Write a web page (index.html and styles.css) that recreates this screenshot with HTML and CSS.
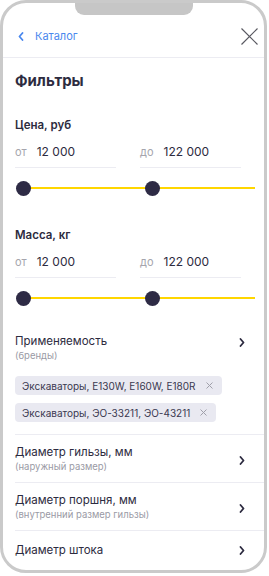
FILE: index.html
```html
<!DOCTYPE html>
<html lang="ru">
<head>
  <meta charset="UTF-8" />
  <meta name="viewport" content="width=device-width, initial-scale=1.0" />
  <title>Фильтры</title>
  <link rel="stylesheet" href="styles.css">
</head>
<body>

  <div class="phone">
    <!-- notch -->
    <div class="notch"></div>

    <!-- header -->
    <div class="header">
      <a class="back" href="#">
        <svg width="6" height="9" viewBox="0 0 6 9"><path d="M4.5 1 L1.5 4.5 L4.5 8" fill="none" stroke="#4a88ee" stroke-width="1.8" stroke-linecap="round" stroke-linejoin="round"/></svg>
        <span>Каталог</span>
      </a>
      <svg class="close" width="17" height="17" viewBox="0 0 17 17"><path d="M0.5 0.5 L16.5 16.5 M16.5 0.5 L0.5 16.5" stroke="#5a5a62" stroke-width="1.2"/></svg>
    </div>

    <div class="content">
      <h1 class="title">Фильтры</h1>

      <!-- price -->
      <div class="range">
        <div class="range-label">Цена, руб</div>
        <div class="fields">
          <div class="field"><span class="pre">от</span><span class="val">12 000</span></div>
          <div class="field"><span class="pre">до</span><span class="val">122 000</span></div>
        </div>
        <div class="slider">
          <div class="knob"></div>
          <div class="knob knob-2"></div>
        </div>
      </div>

      <!-- mass -->
      <div class="range">
        <div class="range-label">Масса, кг</div>
        <div class="fields">
          <div class="field"><span class="pre">от</span><span class="val">12 000</span></div>
          <div class="field"><span class="pre">до</span><span class="val">122 000</span></div>
        </div>
        <div class="slider">
          <div class="knob"></div>
          <div class="knob knob-2"></div>
        </div>
      </div>

      <!-- brands -->
      <div class="apply">
        <div class="row-head">
          <div>
            <div class="row-title">Применяемость</div>
            <div class="row-sub">(бренды)</div>
          </div>
          <svg class="chev" width="6" height="9" viewBox="0 0 6 9"><path d="M1.5 1 L4.5 4.5 L1.5 8" fill="none" stroke="#2d2b40" stroke-width="1.8" stroke-linecap="round" stroke-linejoin="round"/></svg>
        </div>
        <div class="chips">
          <span class="chip">Экскаваторы, E130W, E160W, E180R
            <svg class="x" width="7" height="7" viewBox="0 0 7 7"><path d="M0.5 0.5 L6.5 6.5 M6.5 0.5 L0.5 6.5" stroke="#a0a0aa" stroke-width="1"/></svg>
          </span>
          <span class="chip">Экскаваторы, ЭО-33211, ЭО-43211
            <svg class="x" width="7" height="7" viewBox="0 0 7 7"><path d="M0.5 0.5 L6.5 6.5 M6.5 0.5 L0.5 6.5" stroke="#a0a0aa" stroke-width="1"/></svg>
          </span>
        </div>
      </div>

      <div class="row">
        <div>
          <div class="row-title">Диаметр гильзы, мм</div>
          <div class="row-sub">(наружный размер)</div>
        </div>
        <svg class="chev" width="6" height="9" viewBox="0 0 6 9"><path d="M1.5 1 L4.5 4.5 L1.5 8" fill="none" stroke="#2d2b40" stroke-width="1.8" stroke-linecap="round" stroke-linejoin="round"/></svg>
      </div>

      <div class="row">
        <div>
          <div class="row-title">Диаметр поршня, мм</div>
          <div class="row-sub">(внутренний размер гильзы)</div>
        </div>
        <svg class="chev" width="6" height="9" viewBox="0 0 6 9"><path d="M1.5 1 L4.5 4.5 L1.5 8" fill="none" stroke="#2d2b40" stroke-width="1.8" stroke-linecap="round" stroke-linejoin="round"/></svg>
      </div>

      <div class="row row-single">
        <div class="row-title">Диаметр штока</div>
        <svg class="chev" width="6" height="9" viewBox="0 0 6 9"><path d="M1.5 1 L4.5 4.5 L1.5 8" fill="none" stroke="#2d2b40" stroke-width="1.8" stroke-linecap="round" stroke-linejoin="round"/></svg>
      </div>
    </div>
  </div>

</body>
</html>
```

FILE: styles.css
```css
* {
  margin: 0;
  padding: 0;
  box-sizing: border-box;
}

body {
  background: #fff;
  font-family: Inter, "Noto Sans", sans-serif;
  color: #2d2b40;
}

.phone {
  position: relative;
  width: 267px;
  height: 573px;
  border: 3px solid #cacaca;
  border-radius: 26px;
  overflow: hidden;
  background: #fff;
}

.notch {
  position: absolute;
  top: -3px;
  left: 72px;
  width: 118px;
  height: 15px;
  background: #c6c6c6;
  border-radius: 0 0 9px 9px;
}

.header {
  height: 55px;
  padding: 12px 6px 0 14px;
  display: flex;
  align-items: center;
  justify-content: space-between;
  border-bottom: 1px solid #ececf2;
}

.back {
  display: flex;
  align-items: center;
  gap: 11px;
  color: #4a88ee;
  text-decoration: none;
  font-size: 11px;
  padding-left: 1px;
}

.close {
  display: block;
}

.content {
  padding: 0 0 0 12px;
}

.title {
  font-size: 15px;
  font-weight: 700;
  line-height: 20px;
  margin-top: 13px;
}

.range {
  padding-right: 9px;
}

.range-label {
  font-size: 11.5px;
  font-weight: 600;
  line-height: 16px;
  margin-top: 26px;
}

.range + .range .range-label {
  margin-top: 31px;
}

.fields {
  display: flex;
  gap: 24px;
  margin-top: 9px;
}

.field {
  width: 101px;
  display: flex;
  align-items: baseline;
  gap: 10px;
  line-height: 20px;
  padding-bottom: 5px;
  border-bottom: 1px solid #ececf2;
}

.pre {
  font-size: 11px;
  color: #a5a5ad;
}

.val {
  font-size: 12px;
}

.slider {
  position: relative;
  height: 15px;
  margin: 13px 0 0 1px;
}

.slider::before {
  content: "";
  position: absolute;
  left: 8px;
  right: 0;
  top: 6px;
  height: 2px;
  background: #ffd600;
}

.knob {
  position: absolute;
  left: 0;
  top: 0;
  width: 15px;
  height: 15px;
  border-radius: 50%;
  background: #2e2b45;
}

.knob-2 {
  left: 129px;
}

.apply {
  padding: 28px 19px 12px 0;
  border-bottom: 1px solid #ececf2;
}

.row-head {
  display: flex;
  justify-content: space-between;
  align-items: flex-start;
}

.row-head .chev {
  margin-top: 4px;
}

.row-title {
  font-size: 11.5px;
  line-height: 15px;
}

.row-sub {
  font-size: 9.5px;
  line-height: 13px;
  color: #9a9aa5;
}

.chips {
  display: flex;
  flex-direction: column;
  align-items: flex-start;
  gap: 8px;
  margin-top: 14px;
}

.chip {
  display: inline-flex;
  align-items: center;
  height: 19px;
  padding: 0 9px 0 7px;
  background: #e9e9f1;
  border-radius: 4px;
  font-size: 10px;
  color: #3a3850;
}

.x {
  margin-left: 10px;
}

.row {
  height: 48px;
  padding: 10px 19px 0 0;
  display: flex;
  justify-content: space-between;
  align-items: flex-start;
  border-bottom: 1px solid #ececf2;
}

.row .chev {
  margin-top: 11px;
}

.row-single {
  padding-top: 12px;
  border-bottom: none;
}

.row-single .chev {
  margin-top: 3px;
}
```
